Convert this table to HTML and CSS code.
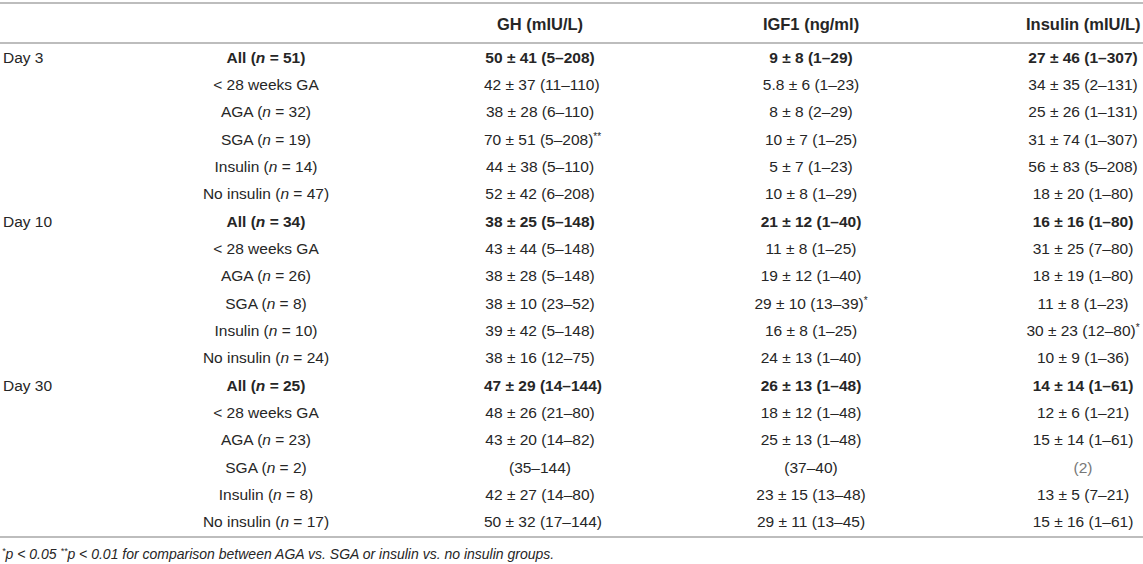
FILE: index.html
```html
<!DOCTYPE html>
<html lang="en">

<head>
    <meta charset="UTF-8">
    <meta name="viewport" content="width=device-width, initial-scale=1.0">
    <title>GH, IGF1 and insulin by day</title>
    <link rel="stylesheet" href="styles.css">
</head>

<body>
    <table class="data">
        <colgroup>
            <col class="c-day">
            <col class="c-group">
            <col class="c-gh">
            <col class="c-igf">
            <col class="c-ins">
        </colgroup>
        <thead>
            <tr>
                <th></th>
                <th></th>
                <th>GH (mIU/L)</th>
                <th>IGF1 (ng/ml)</th>
                <th>Insulin (mIU/L)</th>
            </tr>
        </thead>
        <tbody>
            <tr class="all">
                <td class="day">Day 3</td>
                <td>All (<i>n</i> = 51)</td>
                <td>50 ± 41 (5–208)</td>
                <td>9 ± 8 (1–29)</td>
                <td>27 ± 46 (1–307)</td>
            </tr>
            <tr>
                <td></td>
                <td>&lt; 28 weeks GA</td>
                <td>42 ± 37 (11–110)</td>
                <td>5.8 ± 6 (1–23)</td>
                <td>34 ± 35 (2–131)</td>
            </tr>
            <tr>
                <td></td>
                <td>AGA (<i>n</i> = 32)</td>
                <td>38 ± 28 (6–110)</td>
                <td>8 ± 8 (2–29)</td>
                <td>25 ± 26 (1–131)</td>
            </tr>
            <tr>
                <td></td>
                <td>SGA (<i>n</i> = 19)</td>
                <td>70 ± 51 (5–208)<sup>**</sup></td>
                <td>10 ± 7 (1–25)</td>
                <td>31 ± 74 (1–307)</td>
            </tr>
            <tr>
                <td></td>
                <td>Insulin (<i>n</i> = 14)</td>
                <td>44 ± 38 (5–110)</td>
                <td>5 ± 7 (1–23)</td>
                <td>56 ± 83 (5–208)</td>
            </tr>
            <tr>
                <td></td>
                <td>No insulin (<i>n</i> = 47)</td>
                <td>52 ± 42 (6–208)</td>
                <td>10 ± 8 (1–29)</td>
                <td>18 ± 20 (1–80)</td>
            </tr>
            <tr class="all">
                <td class="day">Day 10</td>
                <td>All (<i>n</i> = 34)</td>
                <td>38 ± 25 (5–148)</td>
                <td>21 ± 12 (1–40)</td>
                <td>16 ± 16 (1–80)</td>
            </tr>
            <tr>
                <td></td>
                <td>&lt; 28 weeks GA</td>
                <td>43 ± 44 (5–148)</td>
                <td>11 ± 8 (1–25)</td>
                <td>31 ± 25 (7–80)</td>
            </tr>
            <tr>
                <td></td>
                <td>AGA (<i>n</i> = 26)</td>
                <td>38 ± 28 (5–148)</td>
                <td>19 ± 12 (1–40)</td>
                <td>18 ± 19 (1–80)</td>
            </tr>
            <tr>
                <td></td>
                <td>SGA (<i>n</i> = 8)</td>
                <td>38 ± 10 (23–52)</td>
                <td>29 ± 10 (13–39)<sup>*</sup></td>
                <td>11 ± 8 (1–23)</td>
            </tr>
            <tr>
                <td></td>
                <td>Insulin (<i>n</i> = 10)</td>
                <td>39 ± 42 (5–148)</td>
                <td>16 ± 8 (1–25)</td>
                <td>30 ± 23 (12–80)<sup>*</sup></td>
            </tr>
            <tr>
                <td></td>
                <td>No insulin (<i>n</i> = 24)</td>
                <td>38 ± 16 (12–75)</td>
                <td>24 ± 13 (1–40)</td>
                <td>10 ± 9 (1–36)</td>
            </tr>
            <tr class="all">
                <td class="day">Day 30</td>
                <td>All (<i>n</i> = 25)</td>
                <td>47 ± 29 (14–144)</td>
                <td>26 ± 13 (1–48)</td>
                <td>14 ± 14 (1–61)</td>
            </tr>
            <tr>
                <td></td>
                <td>&lt; 28 weeks GA</td>
                <td>48 ± 26 (21–80)</td>
                <td>18 ± 12 (1–48)</td>
                <td>12 ± 6 (1–21)</td>
            </tr>
            <tr>
                <td></td>
                <td>AGA (<i>n</i> = 23)</td>
                <td>43 ± 20 (14–82)</td>
                <td>25 ± 13 (1–48)</td>
                <td>15 ± 14 (1–61)</td>
            </tr>
            <tr>
                <td></td>
                <td>SGA (<i>n</i> = 2)</td>
                <td>(35–144)</td>
                <td>(37–40)</td>
                <td><span class="faint">(2)</span></td>
            </tr>
            <tr>
                <td></td>
                <td>Insulin (<i>n</i> = 8)</td>
                <td>42 ± 27 (14–80)</td>
                <td>23 ± 15 (13–48)</td>
                <td>13 ± 5 (7–21)</td>
            </tr>
            <tr>
                <td></td>
                <td>No insulin (<i>n</i> = 17)</td>
                <td>50 ± 32 (17–144)</td>
                <td>29 ± 11 (13–45)</td>
                <td>15 ± 16 (1–61)</td>
            </tr>
        </tbody>
    </table>
    <p class="note"><sup>*</sup>p &lt; 0.05 <sup>**</sup>p &lt; 0.01 for comparison between AGA vs. SGA or insulin vs. no insulin groups.</p>
</body>

</html>
```

FILE: styles.css
```css
body {
    margin: 0;
    padding-top: 2px;
    font-family: "Liberation Sans", Arial, sans-serif;
    color: #262626;
    background-color: #fff;
}

.data {
    width: 1143px;
    table-layout: fixed;
    border-collapse: collapse;
    border-top: 2px solid #bdbdbd;
    border-bottom: 2px solid #bdbdbd;
    font-size: 15.5px;
}

.c-day {
    width: 51px;
}

.c-group {
    width: 430px;
}

.c-gh {
    width: 118px;
}

.c-igf {
    width: 424px;
}

.c-ins {
    width: 120px;
}

.data th {
    height: 36px;
    padding: 2px 3px 0;
    font-size: 16.5px;
    font-weight: bold;
    text-align: center;
    vertical-align: middle;
    white-space: nowrap;
    border-bottom: 2px solid #bdbdbd;
}

.data td {
    height: 27.33px;
    padding: 0 3px;
    text-align: center;
    vertical-align: middle;
    white-space: nowrap;
}

.data tr.all td {
    font-weight: bold;
}

.data td.day,
.data tr.all td.day {
    text-align: left;
    font-weight: normal;
}

.data sup {
    font-size: 10px;
    line-height: 0;
    vertical-align: 5px;
}

.faint {
    color: #777;
}

.note {
    margin: 8px 0 0 2px;
    font-size: 14px;
    font-style: italic;
    line-height: 17px;
}

.note sup {
    font-size: 9px;
    line-height: 0;
    vertical-align: 5px;
}
```
